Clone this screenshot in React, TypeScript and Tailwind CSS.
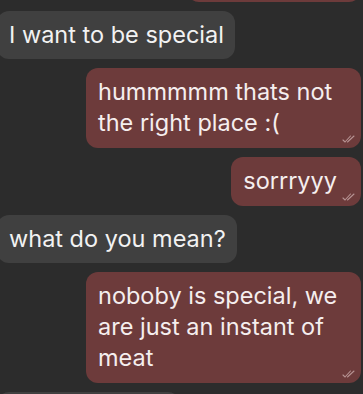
import React from 'react';

type Msg = { id: number; mine: boolean; text: string };

const messages: Msg[] = [
  { id: 1, mine: false, text: 'I want to be special' },
  { id: 2, mine: true, text: 'hummmmm thats not the right place :(' },
  { id: 3, mine: true, text: 'sorrryyy' },
  { id: 4, mine: false, text: 'what do you mean?' },
  { id: 5, mine: true, text: 'noboby is special, we are just an instant of meat' },
];

const ReadTicks: React.FC = () => (
  <svg
    width="13"
    height="8"
    viewBox="0 0 13 8"
    fill="none"
    stroke="#c9a9a9"
    strokeWidth="1.1"
    strokeLinecap="round"
    className="absolute right-[6px] bottom-[5px] opacity-80"
  >
    <path d="M1 5l2 2 5.5-6" />
    <path d="M5.5 7L12 1" />
  </svg>
);

const Bubble: React.FC<{ msg: Msg }> = ({ msg }) => {
  if (!msg.mine) {
    return (
      <div className="flex justify-start">
        <div className="-ml-[3px] rounded-xl bg-[#404040] pl-3 pr-[11px] pt-2 pb-[9px] text-[#f2f2f2]">
          {msg.text}
        </div>
      </div>
    );
  }
  return (
    <div className="flex justify-end">
      <div className="relative max-w-[275px] rounded-xl bg-[#6d3b3b] px-3 pt-2 pb-[10px] text-[#f5eeee]">
        {msg.text}
        <span className="inline-block w-[12px]" />
        <ReadTicks />
      </div>
    </div>
  );
};

export default function App() {
  return (
    <div
      className="h-[394px] w-[363px] overflow-hidden bg-[#2c2c2c] pr-[2px] text-[23.5px] leading-[31px]"
      style={{ fontFamily: 'Inter, "Noto Sans", sans-serif' }}
    >
      <div className="flex flex-col gap-[9px]">
        {/* previous message, mostly scrolled away */}
        <div className="-mt-[46px] flex justify-end">
          <div className="relative h-[48px] w-[174px] rounded-xl bg-[#6d3b3b]">
            <ReadTicks />
          </div>
        </div>
        {messages.map((m) => (
          <Bubble key={m.id} msg={m} />
        ))}
        {/* next message, cut off at the bottom */}
        <div className="flex justify-start">
          <div className="-ml-[3px] h-[48px] w-[183px] rounded-xl bg-[#404040]" />
        </div>
      </div>
    </div>
  );
}
